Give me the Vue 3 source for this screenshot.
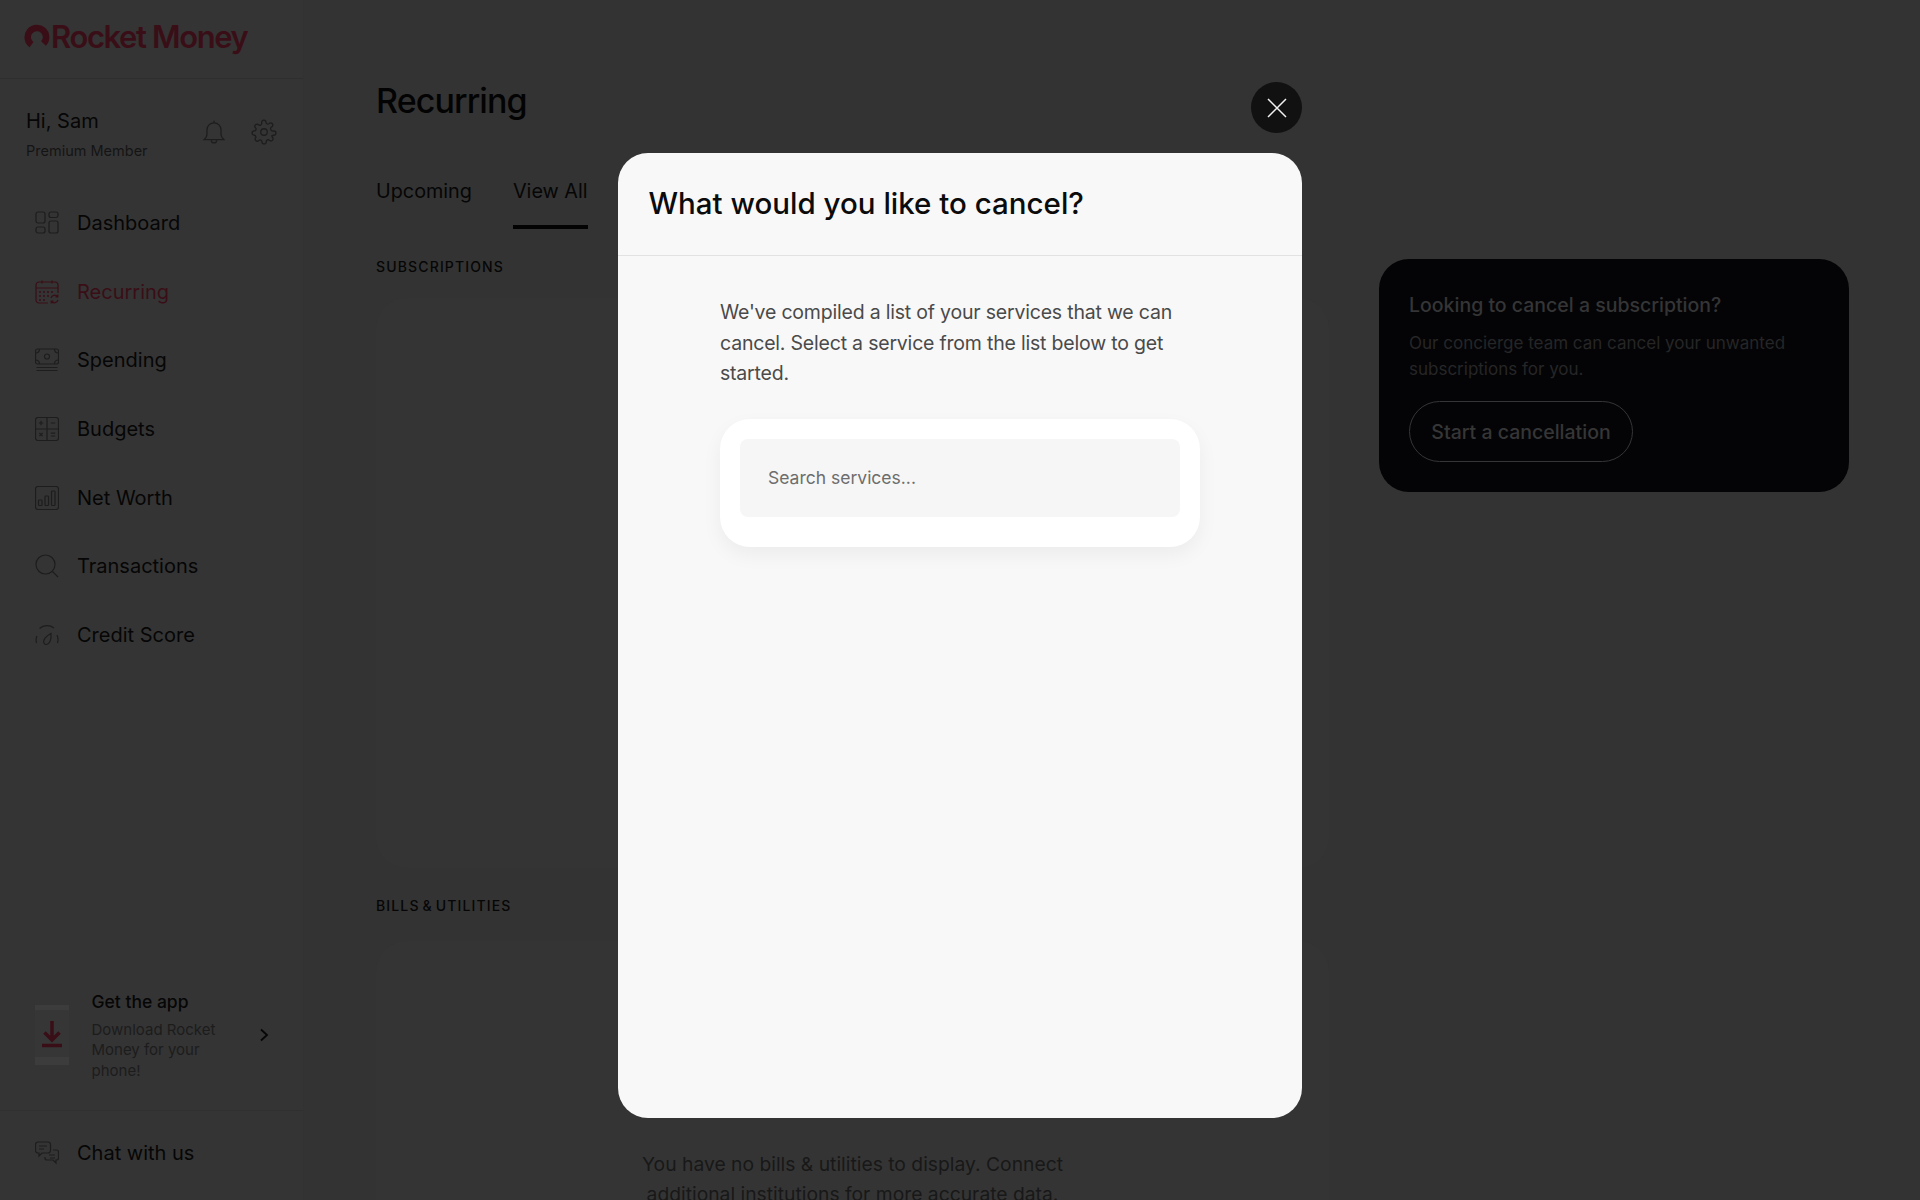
<template>
  <div class="page">
    <aside class="sidebar">
      <div class="logo">
        <svg class="logo-mark" viewBox="0 0 24 24" width="26" height="26">
          <path d="M7 20A8.500 8.500 0 1 1 18 19" />
        </svg>
        <span class="logo-text">Rocket Money</span>
      </div>

      <div class="user">
        <div class="user-info">
          <div class="user-name">Hi, Sam</div>
          <div class="user-plan">Premium Member</div>
        </div>
        <button class="user-icon" aria-label="Notifications">
          <svg class="icon" viewBox="0 0 24 24" width="26" height="26">
            <path d="M12 3.500a6.500 6.500 0 0 0-6.500 6.500v4.500c0 2-1.500 3.500-2.500 4.500h18c-1-1-2.500-2.500-2.500-4.500V10A6.500 6.500 0 0 0 12 3.500z" />
            <path d="M12 3.500V1.500M9.500 19.500a2.500 2.500 0 0 0 5 0" />
          </svg>
        </button>
        <button class="user-icon" aria-label="Settings">
          <svg class="icon" viewBox="0 0 24 24" width="26" height="26">
            <circle cx="12" cy="12" r="3" />
            <path d="M19.400 15a1.650 1.650 0 0 0 .33 1.820l.06.06a2 2 0 1 1-2.830 2.830l-.06-.06a1.650 1.650 0 0 0-2.800 1.170V21a2 2 0 1 1-4 0v-.09a1.650 1.650 0 0 0-2.820-1.110l-.06.06a2 2 0 1 1-2.830-2.830l.06-.06A1.650 1.650 0 0 0 3.090 15H3a2 2 0 1 1 0-4h.09A1.650 1.650 0 0 0 4.200 8.180l-.06-.06a2 2 0 1 1 2.830-2.830l.06.06A1.650 1.650 0 0 0 9.850 4.200V3a2 2 0 1 1 4 0v.09a1.650 1.650 0 0 0 2.800 1.170l.06-.06a2 2 0 1 1 2.830 2.830l-.06.06A1.650 1.650 0 0 0 20.910 11H21a2 2 0 1 1 0 4h-.09a1.650 1.650 0 0 0-1.510 1z" />
          </svg>
        </button>
      </div>

      <nav class="nav">
        <a v-for="item in navItems" :key="item.id" class="nav-item" :class="{ active: item.id === 'recurring' }" href="#">
          <svg class="icon" viewBox="0 0 24 24" width="24" height="24">
            <template v-if="item.id === 'dashboard'">
              <rect x="1" y="1" width="9" height="11" rx="2" />
              <rect x="14" y="1" width="9" height="5.500" rx="2" />
              <rect x="1" y="16" width="9" height="6" rx="2" />
              <rect x="14" y="10" width="9" height="12" rx="2" />
            </template>
            <template v-else-if="item.id === 'recurring'">
              <path d="M13 23H4a3 3 0 0 1-3-3V5a3 3 0 0 1 3-3h16a3 3 0 0 1 3 3v8" />
              <path d="M1 8h22M7 0.500v3M17 0.500v3" />
              <path class="dots" d="M5 12h.01M9 12h.01M13 12h.01M17 12h.01M5 16h.01M9 16h.01M13 16h.01M5 20h.01M9 20h.01" />
              <path d="M16 18a3.800 3.800 0 0 1 6.500-1.500M23 20a3.800 3.800 0 0 1-6.500 1.500M22.800 14.500v2.300h-2.300M16.200 23.500v-2.300h2.300" />
            </template>
            <template v-else-if="item.id === 'spending'">
              <rect x="0.500" y="1" width="23" height="15" rx="2" />
              <circle cx="12" cy="8.500" r="2.500" />
              <path d="M0.500 5c2.500 0 4-1.500 4-4M23.500 5c-2.500 0-4-1.500-4-4M0.500 12c2.500 0 4 1.500 4 4M23.500 12c-2.500 0-4 1.500-4 4" />
              <path d="M1.500 19.500h21M1.500 22.500h21" />
            </template>
            <template v-else-if="item.id === 'budgets'">
              <rect x="0.500" y="0.500" width="23" height="23" rx="2.500" />
              <path d="M12 0.500v23M0.500 12h23" />
              <path d="M3.800 6h4.400M6 3.800v4.400M15.800 6h4.400M4.400 16l3.200 3.200M7.600 16l-3.200 3.200M15.800 16.200h4.400M15.800 19h4.400" />
            </template>
            <template v-else-if="item.id === 'networth'">
              <rect x="0.500" y="0.500" width="23" height="23" rx="2.500" />
              <rect x="3.500" y="14" width="3.500" height="5.500" rx="0.800" />
              <rect x="10" y="10" width="3.500" height="9.500" rx="0.800" />
              <rect x="16.500" y="5" width="3.500" height="14.500" rx="0.800" />
            </template>
            <template v-else-if="item.id === 'transactions'">
              <circle cx="10.500" cy="10.500" r="9.500" />
              <path d="M17.500 17.500L23 23" />
            </template>
            <template v-else-if="item.id === 'credit'">
              <path d="M1.500 20a11.500 11.500 0 0 1 .4-7M4.500 5.500A11.500 11.500 0 0 1 19 5M22 12a11.500 11.500 0 0 1 .5 8" />
              <path d="M9 20c-1.500-3 2-7 7-9.500 .5 5.500-1 10.500-4.500 11-1 .1-2-.5-2.500-1.500z" />
            </template>
          </svg>
          <span>{{ item.label }}</span>
        </a>
      </nav>

      <div class="get-app">
        <svg class="phone" viewBox="0 0 34 60" width="34" height="60">
          <rect class="phone-body" x="0" y="0" width="34" height="60" />
          <rect class="phone-band" x="0" y="0" width="34" height="5" />
          <rect class="phone-band" x="0" y="52" width="34" height="8" />
          <path class="phone-arrow" d="M17 16v19M9.500 27.500L17 35l7.500-7.500" />
          <path class="phone-line" d="M7 40.500h20" />
        </svg>
        <div class="get-app-text">
          <div class="get-app-title">Get the app</div>
          <div class="get-app-desc">Download Rocket Money for your phone!</div>
        </div>
        <svg class="chevron" viewBox="0 0 10 14" width="10" height="14">
          <path d="M2 1.500L8 7l-6 5.500" />
        </svg>
      </div>

      <a class="chat" href="#">
        <svg class="icon" viewBox="0 0 24 24" width="24" height="24">
          <path d="M3 1h10a2.500 2.500 0 0 1 2.500 2.500v6A2.500 2.500 0 0 1 13 12H7l-3 3v-3H3a2.500 2.500 0 0 1-2.500-2.500v-6A2.500 2.500 0 0 1 3 1z" />
          <path d="M4 5h8M4 8h5" />
          <path d="M18 9h3.500a2 2 0 0 1 2 2v6a2 2 0 0 1-2 2H21v3l-3-3h-6a2 2 0 0 1-2-2v-1" />
          <path d="M14 14h6M15 17h5" />
        </svg>
        <span>Chat with us</span>
      </a>
    </aside>

    <main class="main">
      <h1 class="page-title">Recurring</h1>
      <div class="tabs">
        <a class="tab" href="#">Upcoming</a>
        <a class="tab selected" href="#">View All</a>
      </div>

      <div class="columns">
        <div class="lists">
          <h2 class="section-label">SUBSCRIPTIONS</h2>
          <section class="list-card subs"></section>
          <h2 class="section-label">BILLS &amp; UTILITIES</h2>
          <section class="list-card bills">
            <p>You have no bills &amp; utilities to display. Connect additional institutions for more accurate data.</p>
          </section>
        </div>

        <aside class="promo">
          <h3>Looking to cancel a subscription?</h3>
          <p>Our concierge team can cancel your unwanted subscriptions for you.</p>
          <button class="promo-btn">Start a cancellation</button>
        </aside>
      </div>
    </main>

    <div class="overlay">
      <div class="modal">
        <button class="close" aria-label="Close">
          <svg viewBox="0 0 20 20" width="20" height="20">
            <path d="M1 1l18 18M19 1L1 19" />
          </svg>
        </button>
        <header class="modal-head">
          <h2>What would you like to cancel?</h2>
        </header>
        <div class="modal-body">
          <p>We've compiled a list of your services that we can cancel. Select a service from the list below to get started.</p>
          <div class="search-card">
            <input class="search" type="text" placeholder="Search services..." />
          </div>
        </div>
      </div>
    </div>
  </div>
</template>

<script setup>
const navItems = [
  { id: 'dashboard', label: 'Dashboard' },
  { id: 'recurring', label: 'Recurring' },
  { id: 'spending', label: 'Spending' },
  { id: 'budgets', label: 'Budgets' },
  { id: 'networth', label: 'Net Worth' },
  { id: 'transactions', label: 'Transactions' },
  { id: 'credit', label: 'Credit Score' }
]
</script>

<style>
html,
body {
  margin: 0;
  background: #333333;
  overflow: hidden;
}
</style>

<style scoped>
.page {
  display: flex;
  height: 1200px;
  overflow: hidden;
  background: #333333;
  font-family: Inter, "Liberation Sans", sans-serif;
  color: #060606;
}

a {
  color: inherit;
  text-decoration: none;
}

button {
  font-family: inherit;
  background: none;
  border: none;
  padding: 0;
}

.icon {
  fill: none;
  stroke: #1d1d1d;
  stroke-width: 1.200;
  flex: none;
}

/* sidebar */
.sidebar {
  width: 304px;
  flex: none;
  display: flex;
  flex-direction: column;
  background: #343434;
  border-right: 1px solid #323232;
  box-sizing: border-box;
}

.logo {
  height: 79px;
  flex: none;
  display: flex;
  align-items: center;
  gap: 1px;
  padding: 0 0 6px 24px;
  box-sizing: border-box;
  border-bottom: 1px solid #2e2e2e;
  color: #3a0e17;
}

.logo-mark {
  fill: none;
  stroke: #3a0e17;
  stroke-width: 6;
  flex: none;
}

.logo-text {
  font-size: 31px;
  font-weight: 600;
  letter-spacing: -1.400px;
}

.user {
  display: flex;
  align-items: center;
  padding: 28px 26px 0 26px;
  gap: 24px;
}

.user-info {
  flex: 1;
}

.user-name {
  font-size: 20px;
  line-height: 28px;
}

.user-plan {
  font-size: 14.500px;
  line-height: 18px;
  margin-top: 7px;
  color: #141414;
}

.user-icon {
  display: flex;
  margin-bottom: 4px;
}

.nav {
  display: flex;
  flex-direction: column;
  padding-top: 29px;
}

.nav-item {
  height: 68.600px;
  display: flex;
  align-items: center;
  gap: 18px;
  padding-left: 35px;
  font-size: 20px;
}

.nav-item.active {
  color: #3a0e17;
}

.nav-item.active .icon {
  stroke: #3a0e17;
}

.dots {
  stroke-width: 2;
  stroke-linecap: round;
}

.get-app {
  margin-top: auto;
  display: flex;
  align-items: center;
  padding: 0 34px 29px 35px;
  border-bottom: 1px solid #303030;
}

.phone {
  flex: none;
}

.phone-body {
  fill: #363636;
}

.phone-band {
  fill: #3c3c3c;
}

.phone-arrow {
  fill: none;
  stroke: #3a0e17;
  stroke-width: 3.500;
}

.phone-line {
  stroke: #3a0e17;
  stroke-width: 3.500;
}

.get-app-text {
  width: 140px;
  margin-left: 22.500px;
}

.get-app-title {
  font-size: 17.500px;
  line-height: 24px;
  font-weight: 500;
}

.get-app-desc {
  margin-top: 6px;
  font-size: 15px;
  line-height: 20.500px;
  color: #1c1c1c;
}

.chevron {
  flex: none;
  margin-left: auto;
  fill: none;
  stroke: #060606;
  stroke-width: 1.800;
}

.chat {
  height: 89px;
  flex: none;
  box-sizing: border-box;
  padding: 0 0 6px 35px;
  display: flex;
  align-items: center;
  gap: 18px;
  font-size: 20px;
}

/* main column */
.main {
  flex: 1;
  padding: 77px 71px 0 72px;
}

.page-title {
  margin: 0;
  font-size: 34px;
  line-height: 48px;
  font-weight: 500;
  letter-spacing: -0.900px;
  color: #030303;
}

.tabs {
  display: flex;
  gap: 41px;
  margin-top: 28px;
}

.tab {
  height: 76px;
  box-sizing: border-box;
  padding-top: 23px;
  line-height: 30px;
  font-size: 19.800px;
}

.tab.selected {
  border-bottom: 4px solid #030303;
}

.columns {
  display: flex;
  gap: 50px;
  padding-top: 27px;
}

.lists {
  width: 953px;
  flex: none;
}

.section-label {
  margin: 0;
  font-size: 14px;
  line-height: 22px;
  font-weight: 500;
  letter-spacing: 1.150px;
  word-spacing: -2px;
}

.list-card {
  margin-top: 20px;
  border-radius: 30px;
  background: #343434;
}

.subs {
  height: 570px;
  margin-bottom: 27px;
}

.bills {
  margin-top: 24px;
  height: 560px;
  padding-top: 208px;
  box-sizing: border-box;
}

.bills p {
  width: 440px;
  margin: 0 auto;
  text-align: center;
  font-size: 19.300px;
  line-height: 30px;
  color: #181818;
}

.promo {
  width: 470px;
  height: 233px;
  flex: none;
  margin-top: 3px;
  box-sizing: border-box;
  padding: 32px 30px 0;
  border-radius: 30px;
  background: #040406;
}

.promo h3 {
  margin: 0;
  font-size: 19.500px;
  line-height: 28px;
  font-weight: 500;
  color: #353536;
}

.promo p {
  margin: 12px 0 0;
  font-size: 17px;
  line-height: 25.500px;
  color: #262627;
}

.promo-btn {
  margin-top: 19px;
  width: 224px;
  height: 61px;
  border: 1px solid #353537;
  border-radius: 31px;
  font-size: 19.500px;
  font-weight: 500;
  color: #363637;
}

/* modal */
.overlay {
  position: fixed;
  inset: 0;
  display: flex;
  justify-content: center;
  padding-top: 153px;
  box-sizing: border-box;
}

.modal {
  position: relative;
  width: 684px;
  height: 965px;
  border-radius: 30px;
  background: #f8f8f8;
}

.close {
  position: absolute;
  top: -71px;
  right: 0;
  width: 51px;
  height: 51px;
  display: flex;
  align-items: center;
  justify-content: center;
  border-radius: 50%;
  background: #111111;
}

.close svg {
  fill: none;
  stroke: #f2f2f2;
  stroke-width: 1.500;
}

.modal-head {
  height: 103px;
  display: flex;
  align-items: center;
  padding: 0 0 3px 30.500px;
  box-sizing: border-box;
  border-bottom: 1px solid #e2e2e2;
}

.modal-head h2 {
  margin: 0;
  font-size: 29.500px;
  font-weight: 500;
  color: #0b0b0b;
}

.modal-body {
  padding: 41px 102px 0;
}

.modal-body p {
  margin: 0;
  font-size: 19.500px;
  line-height: 30.500px;
  letter-spacing: -0.200px;
  color: #4a4a4a;
}

.search-card {
  margin-top: 30px;
  padding: 20px 20px 30px;
  border-radius: 30px;
  background: #ffffff;
  box-shadow: 0 8px 20px rgba(0, 0, 0, 0.05);
}

.search {
  display: block;
  width: 100%;
  height: 78px;
  box-sizing: border-box;
  padding: 0 28px;
  border: none;
  border-radius: 8px;
  outline: none;
  background: #f6f6f6;
  font-family: inherit;
  font-size: 17.500px;
}

.search::placeholder {
  color: #6d6d6d;
  opacity: 1;
}
</style>
